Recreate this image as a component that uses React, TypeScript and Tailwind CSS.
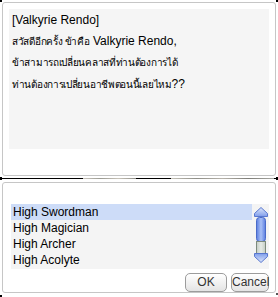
import React from 'react';

const jobs = ['High Swordman', 'High Magician', 'High Archer', 'High Acolyte'];

// Thai runs are set smaller so they take the width they have in the game font
function Th({ children }: { children: React.ReactNode }) {
  return <span className="text-[10px] tracking-[-0.3px]">{children}</span>;
}

function ScrollBar() {
  return (
    <svg width="14" height="56" viewBox="0 0 14 56" className="shrink-0">
      <defs>
        <linearGradient id="cap" x1="0" y1="0" x2="0" y2="1">
          <stop offset="0" stopColor="#dfe8fb" />
          <stop offset="1" stopColor="#7f9deb" />
        </linearGradient>
        <linearGradient id="capDown" x1="0" y1="0" x2="0" y2="1">
          <stop offset="0" stopColor="#7f9deb" />
          <stop offset="1" stopColor="#dfe8fb" />
        </linearGradient>
        <linearGradient id="thumb" x1="0" y1="0" x2="1" y2="0">
          <stop offset="0" stopColor="#5a7de0" />
          <stop offset="0.5" stopColor="#a9c0f6" />
          <stop offset="1" stopColor="#5a7de0" />
        </linearGradient>
        <linearGradient id="track" x1="0" y1="0" x2="1" y2="0">
          <stop offset="0" stopColor="#c4ccc4" />
          <stop offset="0.5" stopColor="#e6ebe6" />
          <stop offset="1" stopColor="#c4ccc4" />
        </linearGradient>
      </defs>
      <polygon points="7,0.5 13.5,6.5 13.5,9.5 0.5,9.5 0.5,6.5" fill="url(#cap)" stroke="#5877cf" />
      <rect x="2.5" y="10.5" width="9" height="24" rx="3" fill="url(#thumb)" stroke="#4a6bc8" />
      <rect x="2.5" y="34.5" width="9" height="12" fill="url(#track)" stroke="#7d8b7d" />
      <polygon points="0.5,46.5 13.5,46.5 13.5,49.5 7,55.5 0.5,49.5" fill="url(#capDown)" stroke="#5877cf" />
    </svg>
  );
}

export default function App() {
  return (
    <div className="relative w-[278px] h-[297px] bg-white overflow-hidden text-[12px] text-black font-['Liberation_Sans',Tahoma,sans-serif]">
      {/* corner marks */}
      <div className="absolute left-0 top-0 w-[2px] h-[2px] bg-black" />
      <div className="absolute right-0 top-0 w-[2px] h-[2px] bg-black" />
      <div className="absolute left-0 bottom-0 w-[2px] h-[2px] bg-black" />
      <div className="absolute right-0 bottom-[2px] w-[2px] h-[2px] bg-[#555]" />

      {/* dialog text */}
      <div className="pt-[2px] px-[2px]">
        <div className="h-[174px] border border-[#c6c6c6] rounded-[3px] bg-white p-[6px]">
          <div className="h-[140px] bg-[#f5f5f5] pl-[3px] pt-[1px] leading-[20.6px] whitespace-nowrap">
            <div>[Valkyrie Rendo]</div>
            <div>
              <Th>สวัสดีอีกครั้ง ข้าคือ</Th> Valkyrie Rendo,
            </div>
            <div>
              <Th>ข้าสามารถเปลี่ยนคลาสที่ท่านต้องการได้</Th>
            </div>
            <div>
              <Th>ท่านต้องการเปลี่ยนอาชีพตอนนี้เลยไหม</Th>??
            </div>
          </div>
        </div>
      </div>

      {/* separator */}
      <div className="mt-[2px] h-[1px] flex">
        <div className="w-[83px] bg-black" />
        <div className="w-[53px] bg-[linear-gradient(90deg,#c9c4bc,#9a9a92,#c7c2b8,#8d8d86)]" />
        <div className="w-[35px] bg-black" />
        <div className="w-[103px] bg-[linear-gradient(90deg,#c3c0b6,#8e8e88,#b6b2aa,#7d7d78,#a8a8a2)]" />
        <div className="flex-1 bg-black" />
      </div>
      <div className="absolute left-0 top-[177px] w-[2px] h-[3px] bg-black" />
      <div className="absolute right-0 top-[177px] w-[2px] h-[3px] bg-black" />

      {/* job list */}
      <div className="mt-[3px] px-[2px]">
        <div className="h-[111px] border border-[#c6c6c6] rounded-[3px] bg-white pl-[8px] pr-[6px] pt-[21px]">
          <div className="h-[65px] bg-[#f4f4f4] flex">
            <div className="flex-1">
              {jobs.map((j, i) => (
                <div
                  key={j}
                  className={
                    i === 0
                      ? 'h-[16px] leading-[16px] pl-[2px] bg-[#cddcf8]'
                      : 'h-[16px] leading-[16px] pl-[2px]'
                  }
                >
                  {j}
                </div>
              ))}
            </div>
            <div className="pt-[3px] pr-[1px] pl-[2px]">
              <ScrollBar />
            </div>
          </div>
          <div className="flex justify-end gap-[4px] mt-[4px]">
            <button className="w-[42px] h-[19px] rounded-[5px] border border-[#9c9c9c] bg-[linear-gradient(#ffffff,#e4e4e4)] text-[#333] leading-[17px]">
              OK
            </button>
            <button className="w-[38px] h-[19px] rounded-[5px] border border-[#9c9c9c] bg-[linear-gradient(#ffffff,#e4e4e4)] text-[#333] leading-[17px]">
              Cancel
            </button>
          </div>
        </div>
      </div>
    </div>
  );
}
